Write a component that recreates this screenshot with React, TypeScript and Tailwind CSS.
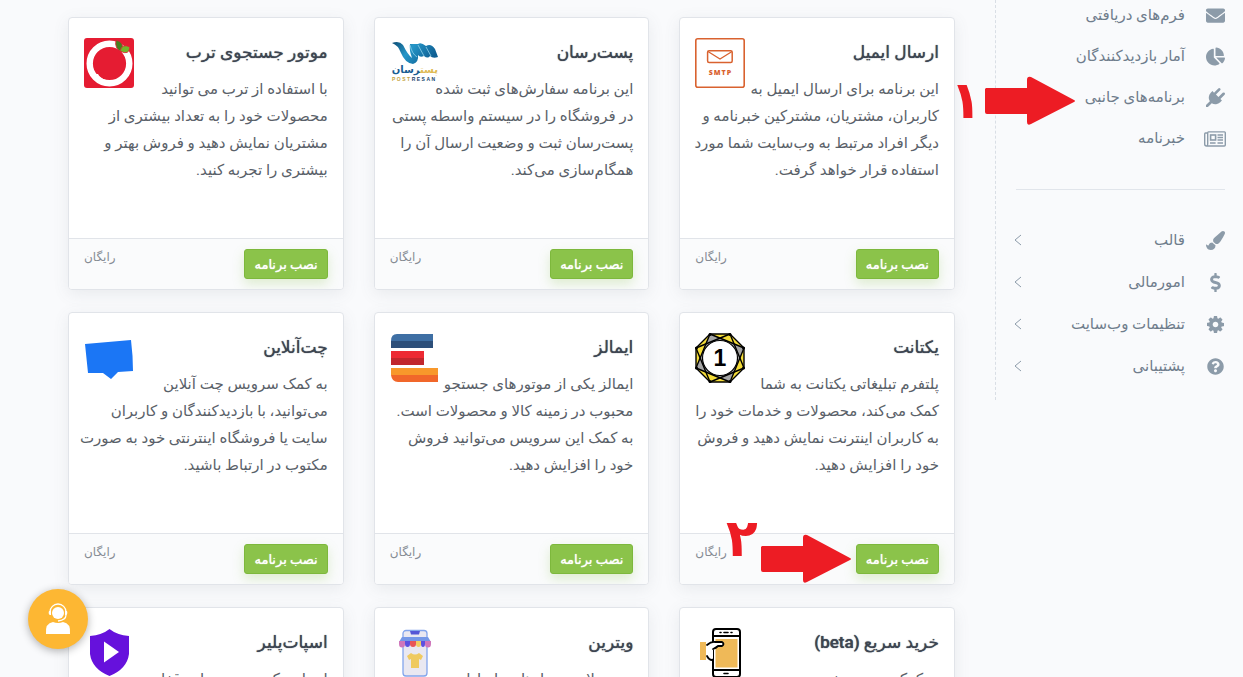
import { FaEnvelope, FaPaintBrush, FaDollarSign, FaQuestionCircle, FaChartPie } from 'react-icons/fa'
import type { ComponentType, ReactNode } from 'react'

type AppInfo = { title: string; description: string; logo: ReactNode }
type MenuItem = { label: string; icon: ComponentType<{ className?: string }>; size: string }

function PlugIcon({ className }: { className?: string }) {
  return (
    <svg viewBox="0 0 1792 1792" fill="currentColor" className={className}>
      <path d="M1755 453q37 38 37 90.500t-37 90.500l-401 400 150 150-160 160q-163 163-389.500 186.500t-411.500-100.500l-362 362h-181v-181l362-362q-124-185-100.500-411.500t186.500-389.500l160-160 150 150 400-401q38-37 91-37t90 37 37 90.500-37 90.500l-400 401 234 234 401-400q38-37 91-37t90 37z" />
    </svg>
  )
}

function GearIcon({ className }: { className?: string }) {
  return (
    <svg viewBox="128 128 1536 1536" fill="currentColor" className={className}>
      <path d="M1152 896q0-106-75-181t-181-75-181 75-75 181 75 181 181 75 181-75 75-181zm512-109v222q0 12-8 23t-20 13l-185 28q-19 54-39 91 35 50 107 138 10 12 10 25t-9 23q-27 37-99 108t-94 71q-12 0-26-9l-138-108q-44 23-91 38-16 136-29 186-7 28-36 28h-222q-14 0-24.500-8.500t-11.500-21.500l-28-184q-49-16-90-37l-141 107q-10 9-25 9-14 0-25-11-126-114-165-168-7-10-7-23 0-12 8-23 15-21 51-66.500t54-70.500q-27-50-41-99l-183-27q-13-2-21-12.500t-8-23.500v-222q0-12 8-23t19-13l186-28q14-46 39-92-40-57-107-138-10-12-10-24 0-10 9-23 26-36 98.500-107.500t94.500-71.500q13 0 26 10l138 107q44-23 91-38 16-136 29-186 7-28 36-28h222q14 0 24.500 8.500t11.500 21.500l28 184q49 16 90 37l142-107q9-9 24-9 13 0 25 10 129 119 165 170 7 8 7 22 0 12-8 23-15 21-51 66.500t-54 70.500q26 50 41 98l183 28q13 2 21 12.500t8 23.500z" />
    </svg>
  )
}

function NewspaperIcon({ className }: { className?: string }) {
  return (
    <svg viewBox="0 0 22 16" fill="none" stroke="currentColor" className={className}>
      <path d="M3.700 2 H1.500 Q0.700 2 0.700 3 V13 Q0.700 15 2.500 15 Q3.700 15 3.700 13 V1.700 Q3.700 0.900 4.500 0.900 H20.500 Q21.300 0.900 21.300 1.700 V14 Q21.300 15 20.300 15 H2.500" strokeWidth="1.4" />
      <rect x="6.600" y="4" width="5" height="5" strokeWidth="1.6" />
      <path d="M13.500 4 H19 M13.500 6.500 H19 M13.500 9 H19 M6 12 H11.600 M13.500 12 H19" strokeWidth="1.3" />
    </svg>
  )
}

const pages: MenuItem[] = [
  { label: 'فرم‌های دریافتی', icon: FaEnvelope, size: 'size-[19px]' },
  { label: 'آمار بازدیدکنندگان', icon: FaChartPie, size: 'size-[19px]' },
  { label: 'برنامه‌های جانبی', icon: PlugIcon, size: 'size-[19px]' },
  { label: 'خبرنامه', icon: NewspaperIcon, size: 'h-4 w-[22px]' },
]

const groups: MenuItem[] = [
  { label: 'قالب', icon: FaPaintBrush, size: 'size-[19px]' },
  { label: 'امورمالی', icon: FaDollarSign, size: 'size-[19px]' },
  { label: 'تنظیمات وب‌سایت', icon: GearIcon, size: 'size-[17px]' },
  { label: 'پشتیبانی', icon: FaQuestionCircle, size: 'size-[17px]' },
]

function SmtpLogo() {
  return (
    <svg viewBox="0 0 50 50" className="size-full">
      <rect x="0.800" y="0.800" width="48.400" height="48.400" rx="2" fill="#fff" stroke="#d9622f" strokeWidth="1.6" />
      <rect x="12.600" y="12.800" width="24.600" height="11.800" rx="1.500" fill="none" stroke="#d9622f" strokeWidth="1.500" />
      <path d="M13 13.500 L25 21 L37 13.500" fill="none" stroke="#d9622f" strokeWidth="1.300" />
      <text x="25.500" y="37" direction="ltr" textAnchor="middle" fontSize="7" fontWeight="800" letterSpacing="1" fill="#d9622f" fontFamily="Open Sans, sans-serif">SMTP</text>
    </svg>
  )
}

function PostResanLogo() {
  return (
    <svg viewBox="0 0 50 50" className="size-full">
      <defs>
        <linearGradient id="post-wave" x1="0" y1="0" x2="1" y2="0.4">
          <stop offset="0" stopColor="#0c4a72" />
          <stop offset="0.45" stopColor="#2596c8" />
          <stop offset="1" stopColor="#0f5f93" />
        </linearGradient>
      </defs>
      <path d="M2 5 Q9 2 13 7 Q18 17 22 20 Q19 12 20 6 L28 6 Q31 4 36 8 Q41 5 45 11 L48 19 Q43 21 40 18 Q38 21 34 18 Q30 20 28 17 Q29 24 23 26 Q15 25 11 15 Q8 7 2 5Z" fill="url(#post-wave)" />
      <path d="M20 7 Q22 16 27 19 M28 7 L34 18 M36 9 L41 18" stroke="#8fd0ea" strokeWidth="0.8" fill="none" />
      <text x="48" y="35" direction="rtl" fontSize="10" fontWeight="700" fill="#e0bb55" fontFamily="DejaVu Sans, sans-serif">پست<tspan fill="#185d92">رسان</tspan></text>
      <text x="2" y="43" direction="ltr" fontSize="5" fontWeight="700" letterSpacing="1.500" fill="#c4a240" fontFamily="Liberation Sans, sans-serif">POST<tspan fill="#17446b">RESAN</tspan></text>
    </svg>
  )
}

function TorobLogo() {
  return (
    <svg viewBox="0 0 50 50" className="size-full">
      <rect width="50" height="50" rx="3" fill="#e51c32" />
      <circle cx="25.500" cy="25.500" r="19.800" fill="none" stroke="#fff" strokeWidth="6.400" />
      <path d="M11 36 Q15 41 12 44 Q17 43 22 42 Q16 40 14 36Z" fill="#fff" />
      <path d="M32 2 Q41 4 38 14 Q30 11 32 2Z" fill="#46801e" stroke="#e51c32" strokeWidth="0.800" />
      <path d="M36 13 Q38 5 46 9 Q45 18 36 13Z" fill="#72b62c" stroke="#e51c32" strokeWidth="0.800" />
    </svg>
  )
}

function YektanetLogo() {
  return (
    <svg viewBox="0 0 50 50" className="size-full" strokeLinejoin="round">
      <path d="M15 1 H35 L49 15 V35 L35 49 H15 L1 35 V15 Z" fill="#f4dc39" stroke="#000" strokeWidth="1.400" />
      <path d="M15 1 L49 15 L35 49 L1 35Z" fill="#a5a5a5" stroke="#000" strokeWidth="1.400" />
      <path d="M35 1 L49 35 L15 49 L1 15Z" fill="none" stroke="#000" strokeWidth="1.400" />
      <circle cx="25" cy="25" r="17.500" fill="#fff" stroke="#000" strokeWidth="1.200" />
      <g>
        <circle cx="15" cy="1.500" r="1.500" />
        <circle cx="35" cy="1.500" r="1.500" />
        <circle cx="48.500" cy="15" r="1.500" />
        <circle cx="48.500" cy="35" r="1.500" />
        <circle cx="35" cy="48.500" r="1.500" />
        <circle cx="15" cy="48.500" r="1.500" />
        <circle cx="1.500" cy="35" r="1.500" />
        <circle cx="1.500" cy="15" r="1.500" />
      </g>
      <text x="25" y="33" direction="ltr" textAnchor="middle" fontSize="23" fontWeight="700" fontFamily="Liberation Sans, sans-serif">1</text>
    </svg>
  )
}

function EmallsLogo() {
  return (
    <svg viewBox="0 0 50 50" className="size-full">
      <path d="M1 8 Q1 1 7 1 H43 V8Z" fill="#3e6fa4" />
      <path d="M1 8 H43 V15 H1Z" fill="#2d4f7a" />
      <path d="M1 18 H34 V25 H1Z" fill="#ed2a33" />
      <path d="M1 25 H34 V32 H1Z" fill="#c1272d" />
      <path d="M1 35 H48 V42 H1Z" fill="#f8982b" />
      <path d="M1 42 H48 V49 H8 Q2 49 1 42Z" fill="#f1672a" />
    </svg>
  )
}

function ChatLogo() {
  return (
    <svg viewBox="0 0 50 50" className="size-full">
      <path d="M1 11 L47 7 Q49 23 49 38 L34 39 L27 46 L19 40 L4 40 Z" fill="#1b76f5" />
    </svg>
  )
}

function QuickBuyLogo() {
  return (
    <svg viewBox="0 0 50 50" className="size-full" strokeLinecap="round" strokeLinejoin="round">
      <rect x="18" y="1" width="27" height="48" rx="3" fill="#fff" stroke="#000" strokeWidth="2" />
      <path d="M18 8 H45 M18 42 H45" stroke="#000" strokeWidth="1.800" />
      <rect x="20.500" y="11" width="22" height="28.500" fill="#efb958" />
      <path d="M25 4.500 H26 M29 4.500 H33 M36 4.500 H37 M29 45.500 H33" stroke="#000" strokeWidth="1.600" />
      <rect x="5" y="14" width="6" height="18" fill="#efb958" />
      <path d="M12 17 Q16 13.500 20 14 H28 Q30 16 28 18 H23 L18 22 V31 L12 28Z" fill="#fff" />
      <path d="M12 17 Q16 13.500 20 14 H27 Q30 16 27 18 H23 Q21 20 18 21 M12 28 Q14 32 17 32" fill="none" stroke="#000" strokeWidth="1.800" />
    </svg>
  )
}

function VitrinLogo() {
  return (
    <svg viewBox="0 0 50 50" className="size-full">
      <rect x="13" y="2.500" width="24" height="45.500" rx="3" fill="#e9e8f1" stroke="#82a5ec" strokeWidth="1.300" />
      <path d="M20 3 H30 L29 6.500 H21 Z" fill="#5556d6" />
      <path d="M12 9 H38 L41 14 H9Z" fill="#7598e8" />
      <path d="M9 13 h6 v3 a3 3.500 0 0 1-6 0Z M35 13 h6 v3 a3 3.500 0 0 1-6 0Z" fill="#cf77bb" />
      <path d="M15 13 h5 v3 a2.500 3 0 0 1-5 0Z" fill="#5d51df" />
      <path d="M20 13 h6 v3 a3 3 0 0 1-6 0Z" fill="#e95556" />
      <path d="M26 13 h5 v3 a2.500 3 0 0 1-5 0Z" fill="#f0cd62" />
      <path d="M31 13 h4 v3 a2 3 0 0 1-4 0Z" fill="#5d51df" />
      <path d="M21 25 Q25 28 29 25 L33 28 L31 32 L29 31 V40 H21 V31 L19 32 L17 28Z" fill="#efca5f" />
    </svg>
  )
}

function SpotPlayerLogo() {
  return (
    <svg viewBox="0 0 50 50" className="size-full">
      <path d="M25.500 1 Q33 7 45 8 V26 Q43 41 25.500 48 Q8 41 6 26 V8 Q18 7 25.500 1Z" fill="#6611dc" />
      <path d="M20 13.500 V34.500 L35 24Z" fill="#fff" />
    </svg>
  )
}

const apps: AppInfo[] = [
  {
    title: 'ارسال ایمیل',
    description: 'این برنامه برای ارسال ایمیل به\nکاربران، مشتریان، مشترکین خبرنامه و\nدیگر افراد مرتبط به وب‌سایت شما مورد\nاستفاده قرار خواهد گرفت.',
    logo: <SmtpLogo />,
  },
  {
    title: 'پست‌رسان',
    description: 'این برنامه سفارش‌های ثبت شده\nدر فروشگاه را در سیستم واسطه پستی\nپست‌رسان ثبت و وضعیت ارسال آن را\nهمگام‌سازی می‌کند.',
    logo: <PostResanLogo />,
  },
  {
    title: 'موتور جستجوی ترب',
    description: 'با استفاده از ترب می توانید\nمحصولات خود را به تعداد بیشتری از\nمشتریان نمایش دهید و فروش بهتر و\nبیشتری را تجربه کنید.',
    logo: <TorobLogo />,
  },
  {
    title: 'یکتانت',
    description: 'پلتفرم تبلیغاتی یکتانت به شما\nکمک می‌کند، محصولات و خدمات خود را\nبه کاربران اینترنت نمایش دهید و فروش\nخود را افزایش دهید.',
    logo: <YektanetLogo />,
  },
  {
    title: 'ایمالز',
    description: 'ایمالز یکی از موتورهای جستجو\nمحبوب در زمینه کالا و محصولات است.\nبه کمک این سرویس می‌توانید فروش\nخود را افزایش دهید.',
    logo: <EmallsLogo />,
  },
  {
    title: 'چت‌آنلاین',
    description: 'به کمک سرویس چت آنلاین\nمی‌توانید، با بازدیدکنندگان و کاربران\nسایت یا فروشگاه اینترنتی خود به صورت\nمکتوب در ارتباط باشید.',
    logo: <ChatLogo />,
  },
  { title: 'خرید سریع (beta)', description: 'به کمک سیستم خرید سریع', logo: <QuickBuyLogo /> },
  { title: 'ویترین', description: 'محصولات و نمادهای را تبادل', logo: <VitrinLogo /> },
  { title: 'اسپات‌پلیر', description: 'اسپات یک سیستم جامع قفل', logo: <SpotPlayerLogo /> },
]

function Card({ app }: { app: AppInfo }) {
  return (
    <article className="flex h-[273px] flex-col overflow-hidden rounded border border-[#e1e4e9] bg-white shadow-[0_4px_16px_rgba(90,97,105,0.1)]">
      <div className="relative flex-1 px-[15px] pt-5">
        <div className="absolute left-[15px] top-5 size-[50px]">{app.logo}</div>
        <h2 className="text-[17px] font-medium leading-7 text-[#3d4551] [text-shadow:0_0_1px_#3d4551]">{app.title}</h2>
        <p className="mt-2.5 whitespace-pre text-[15px] leading-[27px] text-[#5a6169]">{app.description}</p>
      </div>
      <footer className="flex h-[51px] items-start justify-between border-t border-[#e1e4e9] bg-[#fafbfc] px-[15px] pt-2.5">
        <button className="h-[30px] rounded-[3px] border border-[#7db83c] bg-[#8bc34a] px-[9px] text-[13px] font-medium leading-none text-white shadow-[0_5px_12px_rgba(139,195,74,0.25)] [text-shadow:0_0_1px_#fff]">
          نصب برنامه
        </button>
        <span className="text-xs leading-4 text-[#868c94]">رایگان</span>
      </footer>
    </article>
  )
}

function MenuLink({ item, expandable }: { item: MenuItem; expandable?: boolean }) {
  const Icon = item.icon
  return (
    <a href="#" className="flex h-full items-center">
      <span className="flex w-5 justify-center">
        <Icon className={`shrink-0 text-[#8c9ba9] ${item.size}`} />
      </span>
      <span className="mr-5 flex-1 whitespace-nowrap">{item.label}</span>
      {expandable && (
        <svg viewBox="0 0 8 12" className="-ml-0.5 h-3 w-2" fill="none" stroke="#8c9ba9">
          <path d="M7 1 L1 6 L7 11" />
        </svg>
      )}
    </a>
  )
}

function Arrow() {
  return (
    <svg viewBox="0 0 90 50" className="h-[50px] w-[90px]" fill="#ed1c24">
      <path d="M1 12 H42 V4 Q42 0 46 1 L89 24 Q91 25 89 26 L46 48 Q42 50 42 46 V38 H2 Q0 38 0 36 V13Z" />
    </svg>
  )
}

export default function App() {
  return (
    <div dir="rtl" className="relative flex h-screen items-start overflow-hidden bg-[#f9fafc] font-[Roboto,'DejaVu_Sans',sans-serif]">
      <aside className="h-[400px] w-[248px] shrink-0 border-l border-dashed border-[#d9dee5] pl-5 pr-[18px] text-[15px] text-[#6f7d8c]">
        <ul className="-mt-[5px]">
          {pages.map((item) => (
            <li key={item.label} className="h-[41px]">
              <MenuLink item={item} />
            </li>
          ))}
        </ul>
        <hr className="mb-[29px] mt-[30px] border-[#e1e5eb]" />
        <ul>
          {groups.map((item) => (
            <li key={item.label} className="h-[42px]">
              <MenuLink item={item} expandable />
            </li>
          ))}
        </ul>
      </aside>

      <main className="relative grid flex-1 grid-cols-3 gap-x-[30px] gap-y-[22px] pl-[68px] pr-10 pt-[17px]">
        {apps.map((app) => (
          <Card key={app.title} app={app} />
        ))}
      </main>

      {/* Numbered steps */}
      <div className="absolute left-[950px] top-[76px] flex items-start gap-[3px]" dir="ltr">
        <span className="text-[52px] font-bold leading-[50px] text-[#ed1c24]">۱</span>
        <Arrow />
      </div>
      <div className="absolute left-[726px] top-[514px] flex items-start gap-[3px]" dir="ltr">
        <span className="text-[52px] font-bold leading-[50px] text-[#ed1c24]">۲</span>
        <div className="pt-5">
          <Arrow />
        </div>
      </div>

      {/* Support chat */}
      <button aria-label="پشتیبانی آنلاین" className="absolute bottom-7 left-7 flex size-[60px] items-center justify-center rounded-full bg-[#fdb733] shadow-[0_2px_8px_rgba(0,0,0,0.3)]">
        <svg viewBox="0 0 26 32" className="h-8 w-[26px]" fill="#fff">
          <circle cx="13" cy="10" r="6" />
          <path d="M5 11 V9 A8 8 0 0 1 21 9 V12 Q21 17 13 18" fill="none" stroke="#fff" strokeWidth="1.300" />
          <path d="M4 8 h2 v4 h-1 q-2-1-1-4Z M20 8 h2 q1 3-1 4 h-1Z" />
          <path d="M1 31 Q0 20 8 19 Q13 21 18 19 Q26 20 25 31Z" />
        </svg>
      </button>
    </div>
  )
}
